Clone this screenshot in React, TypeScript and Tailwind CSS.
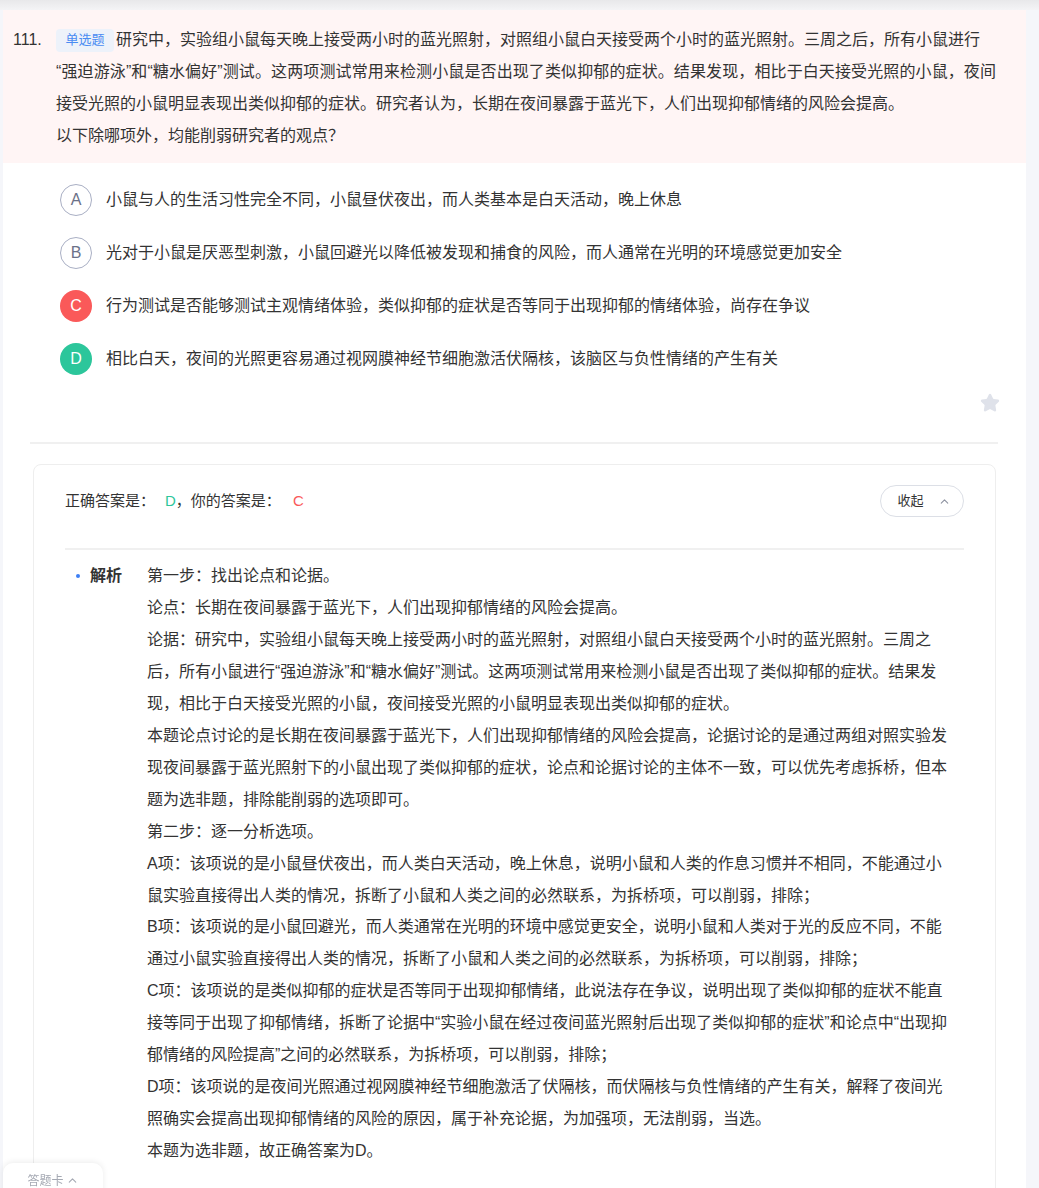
import { Star, ChevronUp } from "lucide-react";

type Line = { t: string; w?: string };

const analysis: Line[] = [
  { t: "第一步：找出论点和论据。" },
  { t: "论点：长期在夜间暴露于蓝光下，人们出现抑郁情绪的风险会提高。" },
  { t: "论据：研究中，实验组小鼠每天晚上接受两小时的蓝光照射，对照组小鼠白天接受两个小时的蓝光照射。三周之", w: "w-[784px]" },
  { t: "后，所有小鼠进行“强迫游泳”和“糖水偏好”测试。这两项测试常用来检测小鼠是否出现了类似抑郁的症状。结果发" },
  { t: "现，相比于白天接受光照的小鼠，夜间接受光照的小鼠明显表现出类似抑郁的症状。" },
  { t: "本题论点讨论的是长期在夜间暴露于蓝光下，人们出现抑郁情绪的风险会提高，论据讨论的是通过两组对照实验发" },
  { t: "现夜间暴露于蓝光照射下的小鼠出现了类似抑郁的症状，论点和论据讨论的主体不一致，可以优先考虑拆桥，但本" },
  { t: "题为选非题，排除能削弱的选项即可。" },
  { t: "第二步：逐一分析选项。" },
  { t: "A项：该项说的是小鼠昼伏夜出，而人类白天活动，晚上休息，说明小鼠和人类的作息习惯并不相同，不能通过小" },
  { t: "鼠实验直接得出人类的情况，拆断了小鼠和人类之间的必然联系，为拆桥项，可以削弱，排除；" },
  { t: "B项：该项说的是小鼠回避光，而人类通常在光明的环境中感觉更安全，说明小鼠和人类对于光的反应不同，不能" },
  { t: "通过小鼠实验直接得出人类的情况，拆断了小鼠和人类之间的必然联系，为拆桥项，可以削弱，排除；" },
  { t: "C项：该项说的是类似抑郁的症状是否等同于出现抑郁情绪，此说法存在争议，说明出现了类似抑郁的症状不能直" },
  { t: "接等同于出现了抑郁情绪，拆断了论据中“实验小鼠在经过夜间蓝光照射后出现了类似抑郁的症状”和论点中“出现抑" },
  { t: "郁情绪的风险提高”之间的必然联系，为拆桥项，可以削弱，排除；" },
  { t: "D项：该项说的是夜间光照通过视网膜神经节细胞激活了伏隔核，而伏隔核与负性情绪的产生有关，解释了夜间光" },
  { t: "照确实会提高出现抑郁情绪的风险的原因，属于补充论据，为加强项，无法削弱，当选。" },
  { t: "本题为选非题，故正确答案为D。" },
];

const options = [
  { k: "A", t: "小鼠与人的生活习性完全不同，小鼠昼伏夜出，而人类基本是白天活动，晚上休息", s: "border border-[#a9afc4] text-[#6b7188]" },
  { k: "B", t: "光对于小鼠是厌恶型刺激，小鼠回避光以降低被发现和捕食的风险，而人通常在光明的环境感觉更加安全", s: "border border-[#a9afc4] text-[#6b7188]" },
  { k: "C", t: "行为测试是否能够测试主观情绪体验，类似抑郁的症状是否等同于出现抑郁的情绪体验，尚存在争议", s: "bg-[#fa5959] text-white" },
  { k: "D", t: "相比白天，夜间的光照更容易通过视网膜神经节细胞激活伏隔核，该脑区与负性情绪的产生有关", s: "bg-[#2cc69b] text-white" },
];

export default function App() {
  return (
    <div className="min-h-screen bg-[#f5f6fa] font-['Liberation_Sans','Noto_Sans_CJK_SC',sans-serif] text-[#333] text-[16px]">
      <div className="h-[10px] bg-gradient-to-b from-[#e8e8ea] to-[#f4f4f6]" />
      <div className="ml-[3px] w-[1023px] bg-white pb-[60px]">
        {/* question */}
        <div className="flex bg-[#fff5f5] pt-[14px] pb-[11px] leading-[32px]">
          <div className="w-[53px] shrink-0 pl-[10px]">111.</div>
          <div className="w-[940px]">
            <div className="flex items-center">
              <span className="flex h-[23px] w-[58px] items-center justify-center rounded-[4px] bg-[#edf2fa] text-[13px] text-[#4a8cf2]">
                单选题
              </span>
              <span className="ml-[2px] block w-[864px] text-justify [text-align-last:justify]">
                研究中，实验组小鼠每天晚上接受两小时的蓝光照射，对照组小鼠白天接受两个小时的蓝光照射。三周之后，所有小鼠进行
              </span>
            </div>
            <div className="w-[940px] text-justify [text-align-last:justify]">
              “强迫游泳”和“糖水偏好”测试。这两项测试常用来检测小鼠是否出现了类似抑郁的症状。结果发现，相比于白天接受光照的小鼠，夜间
            </div>
            <div>接受光照的小鼠明显表现出类似抑郁的症状。研究者认为，长期在夜间暴露于蓝光下，人们出现抑郁情绪的风险会提高。</div>
            <div>以下除哪项外，均能削弱研究者的观点？</div>
          </div>
        </div>

        {/* options */}
        <div className="flex flex-col gap-[21px] pl-[57px] pt-[21px]">
          {options.map((o) => (
            <div key={o.k} className="flex h-[32px] items-center">
              <span className={"flex h-[32px] w-[32px] items-center justify-center rounded-full text-[16px] " + o.s}>{o.k}</span>
              <span className="ml-[14px]">{o.t}</span>
            </div>
          ))}
        </div>

        <div className="mt-[18px] flex justify-end pr-[26px]">
          <Star size={20} className="fill-[#dfe2ea] text-[#dfe2ea]" />
        </div>

        <div className="ml-[27px] mt-[29px] h-[2px] w-[968px] bg-[#f0f0f0]" />

        {/* answer card */}
        <div className="ml-[30px] mt-[20px] w-[963px] rounded-[8px] border border-[#eeeeee] px-[31px] pt-[20px] pb-[40px]">
          <div className="flex h-[32px] items-center justify-between">
            <div className="text-[15px]">
              正确答案是：<span className="ml-[10px] text-[#2cc69b]">D</span>，你的答案是：
              <span className="ml-[12px] text-[#fa5959]">C</span>
            </div>
            <button className="flex h-[32px] w-[84px] items-center justify-center gap-[14px] rounded-full border border-[#dcdfe6] pl-[4px] text-[13px] text-[#333]">
              收起
              <ChevronUp size={13} className="text-[#8d92a0]" />
            </button>
          </div>
          <div className="mt-[31px] h-[2px] bg-[#f0f0f0]" />
          <div className="mt-[10px] flex leading-[31.95px]">
            <div className="flex h-[32px] w-[82px] shrink-0 items-center pl-[11px]">
              <span className="h-[4px] w-[4px] rounded-full bg-[#3d7ff5]" />
              <span className="ml-[10px] font-bold">解析</span>
            </div>
            <div className="w-[810px]">
              {analysis.map((l, i) =>
                l.w ? (
                  <div key={i} className={l.w + " text-justify [text-align-last:justify]"}>
                    {l.t}
                  </div>
                ) : (
                  <div key={i} className="whitespace-nowrap">{l.t}</div>
                )
              )}
            </div>
          </div>
        </div>
      </div>

      <div className="fixed bottom-[-6px] left-[3px] flex h-[31px] w-[100px] items-start justify-center rounded-t-[10px] bg-white pt-[9px] text-[12px] text-[#a5a9b3] shadow-[0_-1px_6px_rgba(0,0,0,0.08)]">
        答题卡
        <ChevronUp size={13} className="ml-[2px] mt-[2px]" />
      </div>
    </div>
  );
}
